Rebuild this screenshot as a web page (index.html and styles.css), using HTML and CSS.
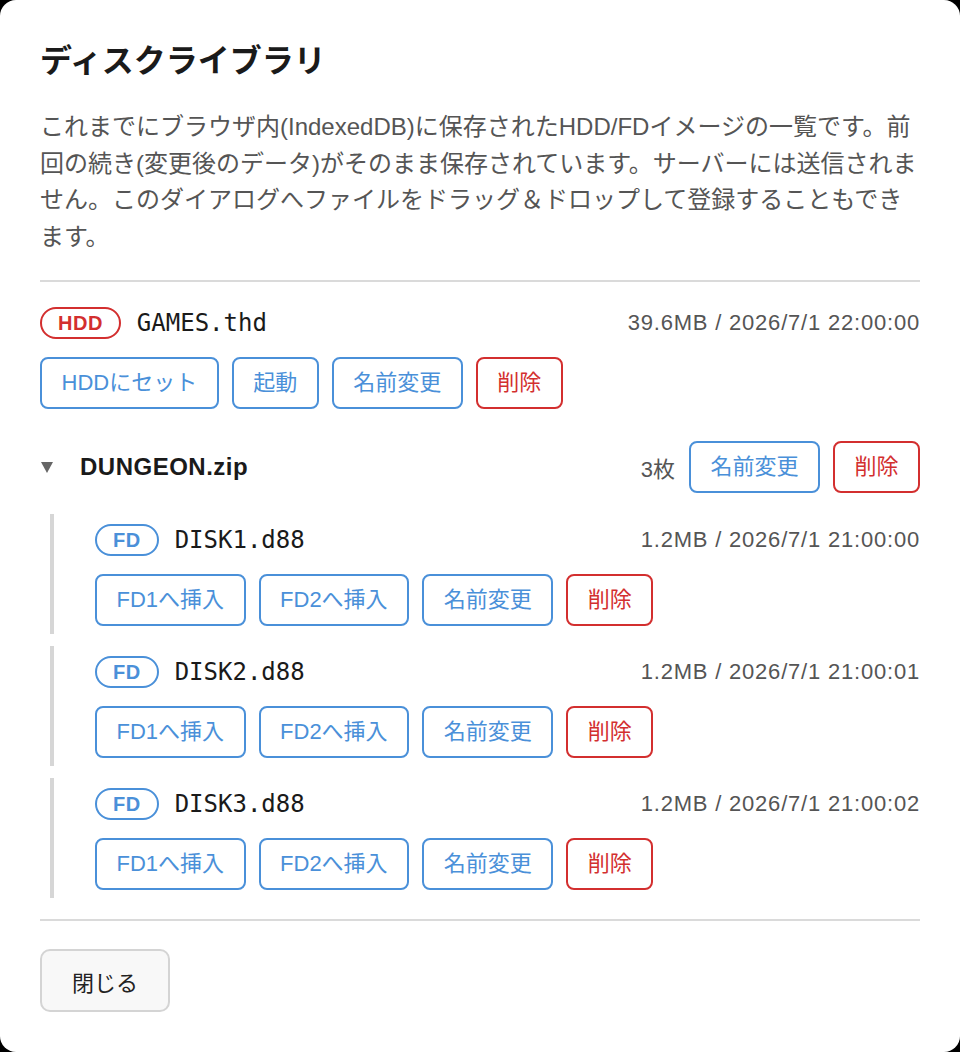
FILE: index.html
```html
<!DOCTYPE html>
<html lang="ja">
<head>
  <meta charset="UTF-8">
  <meta name="viewport" content="width=device-width, initial-scale=1.0">
  <title>ディスクライブラリ</title>
  <link rel="stylesheet" href="styles.css">
</head>
<body>

  <div class="dialog">
    <h1 class="dialog-title">ディスクライブラリ</h1>
    <p class="dialog-desc">これまでにブラウザ内(IndexedDB)に保存されたHDD/FDイメージの一覧です。前回の続き(変更後のデータ)がそのまま保存されています。サーバーには送信されません。このダイアログへファイルをドラッグ＆ドロップして登録することもできます。</p>
    <hr class="divider">

    <div class="disk-list">
      <!-- 単体のHDDイメージ -->
      <div class="disk-item">
        <div class="disk-head">
          <span class="badge badge-hdd">HDD</span>
          <span class="disk-name">GAMES.thd</span>
          <span class="disk-meta">39.6MB / 2026/7/1 22:00:00</span>
        </div>
        <div class="disk-actions">
          <button class="btn">HDDにセット</button>
          <button class="btn">起動</button>
          <button class="btn">名前変更</button>
          <button class="btn btn-danger">削除</button>
        </div>
      </div>

      <!-- zipから展開したFDのまとまり -->
      <details class="archive" open>
        <summary class="archive-head">
          <svg class="archive-caret" width="12" height="11" viewBox="0 0 12 11"><polygon points="0,0 12,0 6,11" fill="#666"/></svg>
          <span class="archive-name">DUNGEON.zip</span>
          <span class="archive-count">3枚</span>
          <button class="btn">名前変更</button>
          <button class="btn btn-danger">削除</button>
        </summary>
        <div class="archive-body">
          <div class="disk-item disk-child">
            <div class="disk-head">
              <span class="badge badge-fd">FD</span>
              <span class="disk-name">DISK1.d88</span>
              <span class="disk-meta">1.2MB / 2026/7/1 21:00:00</span>
            </div>
            <div class="disk-actions">
              <button class="btn">FD1へ挿入</button>
              <button class="btn">FD2へ挿入</button>
              <button class="btn">名前変更</button>
              <button class="btn btn-danger">削除</button>
            </div>
          </div>
          <div class="disk-item disk-child">
            <div class="disk-head">
              <span class="badge badge-fd">FD</span>
              <span class="disk-name">DISK2.d88</span>
              <span class="disk-meta">1.2MB / 2026/7/1 21:00:01</span>
            </div>
            <div class="disk-actions">
              <button class="btn">FD1へ挿入</button>
              <button class="btn">FD2へ挿入</button>
              <button class="btn">名前変更</button>
              <button class="btn btn-danger">削除</button>
            </div>
          </div>
          <div class="disk-item disk-child">
            <div class="disk-head">
              <span class="badge badge-fd">FD</span>
              <span class="disk-name">DISK3.d88</span>
              <span class="disk-meta">1.2MB / 2026/7/1 21:00:02</span>
            </div>
            <div class="disk-actions">
              <button class="btn">FD1へ挿入</button>
              <button class="btn">FD2へ挿入</button>
              <button class="btn">名前変更</button>
              <button class="btn btn-danger">削除</button>
            </div>
          </div>
        </div>
      </details>
    </div>

    <hr class="divider divider-bottom">
    <div class="dialog-footer">
      <button class="btn-close">閉じる</button>
    </div>
  </div>

</body>
</html>
```

FILE: styles.css
```css
* {
  box-sizing: border-box;
}

html, body {
  margin: 0;
  height: 100%;
  background-color: #000;
}

body {
  font-family: "Liberation Sans", "Noto Sans CJK JP", sans-serif;
  color: #1a1a1a;
}

.dialog {
  height: 100vh;
  background-color: #fff;
  border-radius: 16px;
  padding: 39px 40px 0;
  overflow: hidden;
}

.dialog-title {
  margin: 0;
  font-size: 32px;
  line-height: 44px;
  font-weight: 700;
}

.dialog-desc {
  margin: 26px 0 0;
  max-width: 877px;
  font-size: 24px;
  line-height: 36.6px;
  color: #555;
}

.divider {
  margin: 25px 0 0;
  border: none;
  height: 2px;
  background-color: #dadada;
}

.divider-bottom {
  margin-top: 21px;
}

.disk-list {
  padding-top: 25px;
}

.disk-head {
  display: flex;
  align-items: center;
  gap: 16px;
  height: 32px;
}

.badge {
  display: inline-flex;
  align-items: center;
  height: 32px;
  padding: 0 16px;
  border: 2px solid;
  border-radius: 999px;
  font-size: 20px;
  font-weight: 700;
  letter-spacing: 0.5px;
}

.badge-hdd {
  color: #d32f2f;
  border-color: #d32f2f;
}

.badge-fd {
  color: #4a90d9;
  border-color: #4a90d9;
}

.disk-name {
  font-family: "DejaVu Sans Mono", monospace;
  font-size: 24px;
  color: #1a1a1a;
}

.disk-meta {
  margin-left: auto;
  font-size: 22px;
  letter-spacing: 0.8px;
  color: #555;
}

.disk-actions {
  display: flex;
  gap: 13px;
  margin-top: 18px;
}

.btn {
  height: 52px;
  padding: 0 19.5px;
  border: 2px solid #4a90d9;
  border-radius: 8px;
  background-color: #fff;
  color: #4a90d9;
  font-family: inherit;
  font-size: 22px;
  line-height: 1;
  cursor: pointer;
}

.btn-danger {
  border-color: #d32f2f;
  color: #d32f2f;
}

.archive {
  margin-top: 32px;
}

.archive-head {
  display: flex;
  align-items: center;
  list-style: none;
  cursor: pointer;
}

.archive-head::-webkit-details-marker {
  display: none;
}

.archive-caret {
  margin-left: 1px;
  flex-shrink: 0;
}

.archive-name {
  margin-left: 27px;
  font-size: 24px;
  font-weight: 700;
  letter-spacing: 0.5px;
}

.archive-count {
  margin-left: auto;
  margin-right: 14px;
  font-size: 22px;
  color: #555;
}

.archive-head .btn + .btn {
  margin-left: 13px;
}

.archive-body {
  display: flex;
  flex-direction: column;
  gap: 12px;
  padding-top: 21px;
}

.disk-child {
  margin-left: 10px;
  border-left: 4px solid #d6d6d6;
  padding: 10px 0 8px 41px;
}

.dialog-footer {
  padding-top: 28px;
}

.btn-close {
  height: 63px;
  padding: 0 30px;
  border: 2px solid #d4d4d4;
  border-radius: 10px;
  background-color: #f8f8f8;
  color: #222;
  font-family: inherit;
  font-size: 22px;
  cursor: pointer;
}
```
